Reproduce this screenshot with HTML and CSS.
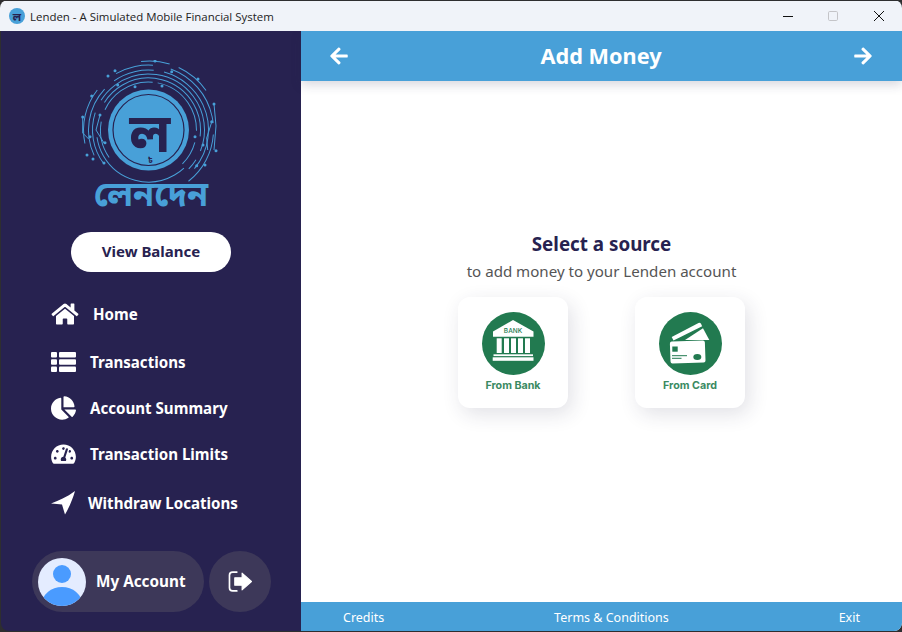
FILE: index.html
```html
<!DOCTYPE html>
<html lang="en">
<head>
<meta charset="utf-8">
<title>Lenden</title>
<link rel="stylesheet" href="styles.css">
</head>
<body>
<div class="window">
  <header class="titlebar">
    <div class="tb-left">
      <span class="app-icon"><span class="app-glyph">ল</span></span>
      <span class="tb-title">Lenden - A Simulated Mobile Financial System</span>
    </div>
    <div class="tb-controls">
      <svg class="wc" width="46" height="30" viewBox="0 0 46 30"><path d="M19 15.500h10" stroke="#111" stroke-width="1"/></svg>
      <svg class="wc" width="46" height="30" viewBox="0 0 46 30"><rect x="18.500" y="10.500" width="9" height="9" rx="1.200" fill="none" stroke="#c4c4c8"/></svg>
      <svg class="wc" width="46" height="30" viewBox="0 0 46 30"><path d="M18 10l10 10M28 10l-10 10" stroke="#111" stroke-width="1"/></svg>
    </div>
  </header>
  <div class="app">
    <aside class="sidebar">
      <div class="logo">
        <svg class="logo-mark" width="140" height="125" viewBox="0 0 140 125" fill="none" stroke="#48a0d8">
          <circle cx="67.500" cy="70" r="40.500" fill="#48a0d8" stroke="none"/>
          <circle cx="67.500" cy="70" r="35.500" stroke="#272250" stroke-width="1.200"/>
          <g stroke-width="1">
            <circle cx="67.500" cy="70" r="48" pathLength="360" stroke-dasharray="45 15 70 6 80 14 30 100" transform="rotate(145 67.500 70)"/>
            <circle cx="67.500" cy="70" r="52" pathLength="360" stroke-dasharray="22 40 155 40 103" transform="rotate(150 67.500 70)"/>
            <circle cx="67.500" cy="70" r="56" pathLength="360" stroke-dasharray="55 14 170 10 12 99" transform="rotate(143 67.500 70)"/>
            <circle cx="67.500" cy="70" r="60" pathLength="360" stroke-dasharray="68 12 40 10 115 115" transform="rotate(155 67.500 70)"/>
            <circle cx="67.500" cy="70" r="65" pathLength="360" stroke-dasharray="50 22 34 16 64 10 48 116" transform="rotate(168 67.500 70)"/>
            <circle cx="68.500" cy="70" r="69" pathLength="360" stroke-dasharray="24 8 30 298" transform="rotate(263 68.500 70)"/>
          </g>
          <path d="M1.700 57v16l6 6M19 55l-4 15 8 13M133 44l2 22-2 24M130.700 62l-5 16 1 12" stroke-width="1"/>
          <g fill="#48a0d8" stroke="none">
            <circle cx="74" cy="1" r="1.500"/><circle cx="34" cy="10.700" r="1.500"/><circle cx="27" cy="16" r="1.500"/>
            <circle cx="10.700" cy="36" r="1.500"/><circle cx="1.700" cy="57" r="1.500"/><circle cx="9" cy="76.700" r="1.500"/>
            <circle cx="6" cy="95" r="1.500"/><circle cx="23" cy="103" r="1.500"/><circle cx="12" cy="99" r="1.500"/>
            <circle cx="19" cy="55" r="1.500"/><circle cx="36.700" cy="25" r="1.500"/><circle cx="90.700" cy="11.700" r="1.500"/>
            <circle cx="117" cy="19" r="1.500"/><circle cx="133" cy="44" r="1.500"/><circle cx="130.700" cy="61.700" r="1.500"/>
            <circle cx="115.700" cy="105.700" r="1.500"/><circle cx="124" cy="105" r="1.500"/><circle cx="135" cy="90.700" r="1.500"/>
            <circle cx="122" cy="85" r="1.500"/><circle cx="114" cy="76.700" r="1.500"/><circle cx="81" cy="26" r="1.500"/>
            <circle cx="54" cy="26.700" r="1.500"/><circle cx="24" cy="82.700" r="1.500"/>
          </g>
        </svg>
        <span class="logo-letter">ল</span>
        <span class="logo-taka">৳</span>
        <span class="logo-word">লেনদেন</span>
      </div>
      <button class="balance">View Balance</button>
      <nav class="menu">
        <a class="item item-home">
          <svg class="ico" width="28" height="24" viewBox="0 0 576 512" fill="#fff"><path d="M280.37 148.26L96 300.11V464a16 16 0 0 0 16 16l112.060-.29a16 16 0 0 0 15.920-16V368a16 16 0 0 1 16-16h64a16 16 0 0 1 16 16v95.640a16 16 0 0 0 16 16.050L464 480a16 16 0 0 0 16-16V300L295.670 148.260a12.190 12.190 0 0 0-15.300 0zM571.600 251.470L488 182.560V44.050a12 12 0 0 0-12-12h-56a12 12 0 0 0-12 12v72.610L318.470 43a48 48 0 0 0-61 0L4.340 251.470a12 12 0 0 0-1.600 16.900l25.500 31A12 12 0 0 0 45.150 301l235.220-193.740a12.190 12.190 0 0 1 15.300 0L530.900 301a12 12 0 0 0 16.900-1.600l25.500-31a12 12 0 0 0-1.700-16.930z"/></svg>
          <span>Home</span>
        </a>
        <a class="item item-tx">
          <svg class="ico" width="25" height="20" viewBox="0 0 25 20" fill="#fff"><rect x="0" y="0" width="6" height="5.500" rx="1"/><rect x="8" y="0" width="17" height="5.500" rx="1"/><rect x="0" y="7.200" width="6" height="5.500" rx="1"/><rect x="8" y="7.200" width="17" height="5.500" rx="1"/><rect x="0" y="14.500" width="6" height="5.500" rx="1"/><rect x="8" y="14.500" width="17" height="5.500" rx="1"/></svg>
          <span>Transactions</span>
        </a>
        <a class="item item-sum">
          <svg class="ico" width="25" height="24" viewBox="0 0 544 512" fill="#fff"><path d="M527.790 288H290.500l158.030 158.030c6.040 6.040 15.980 6.530 22.190.68 38.700-36.460 65.320-85.610 73.130-140.860 1.340-9.460-6.510-17.850-16.060-17.850zm-15.830-64.800C503.720 103.740 408.260 8.280 288.800.04 279.680-.59 272 7.100 272 16.240V240h223.770c9.140 0 16.820-7.680 16.190-16.800zM224 288V50.710c0-9.550-8.390-17.400-17.840-16.060C86.990 51.490-4.100 155.600.14 280.370 4.500 408.510 114.830 513.590 243.030 511.980c50.400-.63 96.970-16.870 135.260-44.030 7.900-5.600 8.420-17.230 1.570-24.080L224 288z"/></svg>
          <span>Account Summary</span>
        </a>
        <a class="item item-lim">
          <svg class="ico" width="25" height="22" viewBox="0 0 576 512" fill="#fff"><path d="M288 32C128.940 32 0 160.940 0 320c0 52.800 14.250 102.260 39.060 144.800 5.610 9.620 16.300 15.200 27.440 15.200h443c11.140 0 21.830-5.580 27.440-15.200C561.750 422.260 576 372.800 576 320c0-159.060-128.940-288-288-288zm0 64c14.710 0 26.580 10.130 30.320 23.650-1.110 2.260-2.640 4.230-3.450 6.670l-9.220 27.670c-5.130 3.490-10.970 6.010-17.640 6.010-17.670 0-32-14.330-32-32S270.330 96 288 96zM96 384c-17.670 0-32-14.330-32-32s14.330-32 32-32 32 14.330 32 32-14.330 32-32 32zm48-160c-17.670 0-32-14.330-32-32s14.330-32 32-32 32 14.330 32 32-14.330 32-32 32zm246.770-72.410l-61.330 184C343.130 347.330 352 364.540 352 384c0 11.720-3.380 22.550-8.880 32H232.880c-5.500-9.450-8.880-20.280-8.880-32 0-33.940 26.500-61.430 59.900-63.590l61.340-184.010c4.170-12.560 17.730-19.450 30.360-15.170 12.570 4.190 19.350 17.790 15.170 30.360zm14.660 57.200l15.520-46.550c3.470-1.290 7.130-2.230 11.050-2.230 17.670 0 32 14.330 32 32s-14.330 32-32 32c-11.380-.01-20.890-6.280-26.570-15.220zM480 384c-17.670 0-32-14.330-32-32s14.330-32 32-32 32 14.330 32 32-14.330 32-32 32z"/></svg>
          <span>Transaction Limits</span>
        </a>
        <a class="item item-wd">
          <svg class="ico" width="24" height="24" viewBox="0 0 24 24" fill="#fff"><path d="M24 0C16 6 7 10 0 12.500 4 13 8 13 11 13.500 12 17 13 20 14 23.500 19 15 22 7 24 0z"/></svg>
          <span>Withdraw Locations</span>
        </a>
      </nav>
      <div class="account">
        <div class="pill">
          <svg class="avatar" width="48" height="48" viewBox="0 0 48 48"><defs><clipPath id="c"><circle cx="24" cy="24" r="24"/></clipPath></defs><g clip-path="url(#c)"><rect width="48" height="48" fill="#e4ecff"/><circle cx="24" cy="16" r="9" fill="#4a9bff"/><ellipse cx="24" cy="46" rx="20" ry="17" fill="#4a9bff"/></g></svg>
          <span>My Account</span>
        </div>
        <button class="logout" aria-label="Log out">
          <svg width="25" height="21" viewBox="1 1 23 20" fill="none"><path d="M9 2H5a3 3 0 0 0-3 3v12a3 3 0 0 0 3 3h4" stroke="#fff" stroke-width="1.600" stroke-linecap="round"/><path d="M7 7.500h7V3l9 8-9 8v-4.500H7z" fill="#fff" stroke="#fff" stroke-linejoin="round"/></svg>
        </button>
      </div>
    </aside>
    <main class="main">
      <div class="topbar">
        <svg width="18" height="20" viewBox="0 0 448 512" fill="#fff"><path d="M257.500 445.100l-22.200 22.200c-9.400 9.400-24.600 9.400-33.900 0L7 273c-9.400-9.400-9.400-24.600 0-33.900L201.400 44.700c9.400-9.400 24.600-9.400 33.900 0l22.200 22.200c9.500 9.500 9.300 25-.4 34.300L136.600 216H424c13.300 0 24 10.700 24 24v32c0 13.300-10.700 24-24 24H136.600l120.500 114.800c9.800 9.300 10 24.800.4 34.300z"/></svg>
        <h1>Add Money</h1>
        <svg width="18" height="20" viewBox="0 0 448 512" fill="#fff"><path d="M190.500 66.900l22.200-22.200c9.400-9.400 24.600-9.400 33.900 0L441 239c9.400 9.400 9.400 24.600 0 33.900L246.600 467.300c-9.400 9.400-24.600 9.400-33.900 0l-22.200-22.200c-9.500-9.500-9.300-25 .4-34.300L311.400 296H24c-13.300 0-24-10.700-24-24v-32c0-13.300 10.700-24 24-24h287.400L190.900 101.200c-9.800-9.300-10-24.800-.4-34.300z"/></svg>
      </div>
      <div class="content">
        <h2>Select a source</h2>
        <p>to add money to your Lenden account</p>
        <div class="sources">
          <div class="card">
            <svg width="63" height="63" viewBox="0 0 63 63"><circle cx="31.500" cy="31.500" r="31.500" fill="#227a50"/><path d="M31 8L11 19.500V24.700H51.500V19.500z" fill="#fff"/><text x="31" y="21.300" class="bank-t">BANK</text><g fill="#fff"><rect x="14.700" y="26.300" width="5" height="14.700"/><rect x="22" y="26.300" width="5" height="14.700"/><rect x="29" y="26.300" width="5" height="14.700"/><rect x="36" y="26.300" width="5" height="14.700"/><rect x="43" y="26.300" width="5" height="14.700"/><rect x="11.500" y="42.300" width="39.500" height="1.800"/><rect x="10.700" y="45.300" width="40.800" height="3.500"/></g></svg>
            <span>From Bank</span>
          </div>
          <div class="card">
            <svg width="63" height="63" viewBox="0 0 63 63"><circle cx="31.500" cy="31.500" r="31.500" fill="#227a50"/><path d="M12.700 25L39.500 11a2 2 0 0 1 2.500.7l1.200 2.500L14.500 28.500z" fill="#fff"/><path d="M26 28L44 16.300l6.300 11.700z" fill="#fff"/><rect x="11.200" y="29" width="35" height="22" rx="2" fill="#fff" transform="rotate(-2 29 40)"/><rect x="13.300" y="34.500" width="5.400" height="5.200" fill="#227a50"/><path d="M13 43.700h15M13 46.300h9.500" stroke="#227a50" stroke-width="1"/><ellipse cx="38.300" cy="45" rx="4" ry="2.900" fill="#227a50"/></svg>
            <span>From Card</span>
          </div>
        </div>
      </div>
      <footer class="footer">
        <a>Credits</a>
        <a>Terms &amp; Conditions</a>
        <a>Exit</a>
      </footer>
    </main>
  </div>
</div>
</body>
</html>
```
FILE: styles.css
```css
* { box-sizing: border-box; }
html, body { margin: 0; height: 100%; background: #2e2e30; }
body { font-family: "Noto Sans", "Noto Sans Bengali", sans-serif; overflow: hidden; }
.window { width: 902px; height: 632px; display: flex; flex-direction: column; border-radius: 8px; overflow: hidden; padding: 1px 0 1px 1px; }
.titlebar { height: 30px; flex: none; background: #f0f3f9; display: flex; justify-content: space-between; align-items: center; margin-left: -1px; padding-left: 9px; }
.tb-left { display: flex; align-items: center; gap: 5px; }
.app-icon { width: 16px; height: 16px; border-radius: 50%; background: #48a0d8; display: flex; align-items: center; justify-content: center; }
.app-glyph { font-size: 11px; font-weight: 700; color: #272250; line-height: 1; }
.tb-title { font-family: "Open Sans", sans-serif; font-size: 11.45px; color: #222; }
.tb-controls { display: flex; }
.wc { display: block; }
.app { flex: 1; display: flex; min-height: 0; border-radius: 0 0 8px 8px; overflow: hidden; }
.sidebar { width: 300px; flex: none; background: #272250; display: flex; flex-direction: column; align-items: center; }
.logo { position: relative; margin-top: 29px; height: 151px; width: 140px; display: flex; flex-direction: column; align-items: center; }
.logo-mark { display: block; }
.logo-letter { position: absolute; left: 0; right: 0; top: 48px; height: 46px; padding-right: 2px; text-align: center; font-size: 54px; font-weight: 700; line-height: 46px; color: #272250; }
.logo-taka { position: absolute; left: 67px; top: 95px; font-size: 8px; font-weight: 700; line-height: 9px; color: #272250; }
.logo-word { position: absolute; left: 0; right: 0; top: 112px; text-align: center; font-size: 34px; font-weight: 700; line-height: 42px; color: #48a0d8; white-space: nowrap; }
.balance { margin-top: 21px; width: 160px; height: 40px; border: 0; padding: 0 0 2px; border-radius: 20px; background: #fff; color: #272250; font: 700 15px "Noto Sans", sans-serif; }
.menu { align-self: stretch; display: flex; flex-direction: column; margin-top: 28px; }
.item { display: flex; align-items: center; color: #fff; font-weight: 700; font-size: 15.1px; padding-left: 50px; }
.item-home { height: 28px; gap: 14px; }
.item-tx { margin-top: 20px; height: 28px; gap: 14px; }
.item-sum { margin-top: 18px; height: 28px; gap: 14px; }
.item-lim { margin-top: 18px; height: 28px; gap: 14px; }
.item-wd { margin-top: 21px; height: 28px; gap: 13px; }
.account { margin-top: auto; margin-bottom: 19px; display: flex; gap: 5px; align-self: stretch; padding-left: 31px; }
.pill { width: 172px; height: 61px; border-radius: 31px; background: #3d3859; display: flex; align-items: center; gap: 10px; padding: 0 0 1px 6px; color: #fff; font-weight: 700; font-size: 15.3px; }
.avatar { display: block; margin-top: 1px; }
.logout { width: 62px; height: 61px; border: 0; padding: 0; border-radius: 50%; background: #3d3859; display: flex; align-items: center; justify-content: center; }
.main { flex: 1; display: flex; flex-direction: column; background: #fff; min-width: 0; }
.topbar { height: 50px; flex: none; background: #48a0d8; display: flex; align-items: center; justify-content: space-between; padding: 0 30px 1px 29px; box-shadow: 0 4px 10px rgba(40, 40, 80, .18); position: relative; }
.topbar h1 { margin: 0; font-size: 21.7px; font-weight: 700; color: #fff; }
.content { flex: 1; display: flex; flex-direction: column; align-items: center; padding-top: 151px; }
.content h2 { margin: 0; font-size: 18.8px; line-height: 24px; font-weight: 700; color: #272250; }
.content p { margin: 4px 0 0; font-size: 15.1px; line-height: 22px; color: #555; }
.sources { display: flex; gap: 67px; margin-top: 15px; }
.card { width: 110px; height: 111px; border-radius: 12px; background: #fff; box-shadow: 4px 6px 20px rgba(40, 40, 80, .14); display: flex; flex-direction: column; align-items: center; padding-top: 15px; }
.card span { font-family: Inter, sans-serif; font-size: 10.7px; font-weight: 700; color: #3a8a62; margin-top: 4px; }
.bank-t { font-family: Inter, sans-serif; font-size: 6.5px; font-weight: 500; fill: #227a50; text-anchor: middle; }
.footer { height: 29px; flex: none; background: #48a0d8; display: flex; justify-content: space-between; align-items: center; padding: 2px 42px 0; color: #fff; font-size: 12.5px; }
```
